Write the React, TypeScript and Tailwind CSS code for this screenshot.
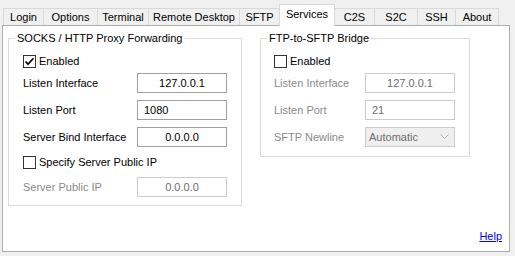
import React from "react";

const tabs: { label: string; w: number }[] = [
  { label: "Login", w: 41 },
  { label: "Options", w: 55 },
  { label: "Terminal", w: 52 },
  { label: "Remote Desktop", w: 92 },
  { label: "SFTP", w: 41 },
  { label: "Services", w: 56 },
  { label: "C2S", w: 41 },
  { label: "S2C", w: 44 },
  { label: "SSH", w: 39 },
  { label: "About", w: 44 },
];

function Check({ checked }: { checked: boolean }) {
  return (
    <div className="w-[13px] h-[13px] border border-[#333333] bg-white flex items-center justify-center shrink-0">
      {checked && (
        <svg width="11" height="11" viewBox="0 0 11 11">
          <path d="M1.5 5.5 L4 8.2 L9.5 2.2" stroke="#000" strokeWidth="1.7" fill="none" />
        </svg>
      )}
    </div>
  );
}

function Field({
  label,
  value,
  align,
  disabledLabel,
  disabledInput,
  labelW,
}: {
  label: string;
  value: string;
  align: "left" | "center";
  disabledLabel?: boolean;
  disabledInput?: boolean;
  labelW: number;
}) {
  return (
    <div className="flex items-center h-[20px]">
      <div
        className={`${disabledLabel ? "text-[#8a8a8a]" : "text-black"}`}
        style={{ width: labelW }}
      >
        {label}
      </div>
      <div
        className={`w-[90px] h-[20px] border bg-white flex items-center ${
          disabledInput ? "border-[#cccccc] text-[#6d6d6d]" : "border-[#a0a0a0] text-black"
        } ${align === "center" ? "justify-center" : "justify-start pl-[6px]"}`}
      >
        {value}
      </div>
    </div>
  );
}

export default function App() {
  return (
    <div
      className="w-[515px] h-[256px] bg-[#f0f0f0] text-[11px] leading-[13px] text-black"
      style={{ fontFamily: '"Liberation Sans", Arial, sans-serif' }}
    >
      <div className="h-[25px] flex items-end pl-[3px]">
        {tabs.map((t, i) => {
          const sel = t.label === "Services";
          return (
            <div
              key={t.label}
              style={{ width: t.w }}
              className={`${i > 0 ? "-ml-px" : ""} border-t border-l border-r border-[#d9d9d9] flex justify-center ${
                sel
                  ? "relative z-10 h-[22px] -mb-px bg-white items-start pt-[3px] border-[#d9d9d9]"
                  : "h-[17px] bg-[#f0f0f0] items-center"
              }`}
            >
              {t.label}
            </div>
          );
        })}
      </div>
      <div className="ml-[2px] w-[508px] h-[227px] border border-[#adadad] bg-white flex flex-col">
        <div className="flex items-start pl-[5px] pt-[6px] gap-[18px]">
          <fieldset className="w-[234px] border border-[#dcdcdc] pl-[14px] pb-[8px]">
            <legend className="ml-[-8px] px-[2px]">SOCKS / HTTP Proxy Forwarding</legend>
            <div className="flex items-center gap-[3px] h-[13px] mt-[10px]">
              <Check checked={true} />
              <span>Enabled</span>
            </div>
            <div className="flex flex-col gap-[7px] mt-[5px]">
              <Field label="Listen Interface" value="127.0.0.1" align="center" labelW={114} />
              <Field label="Listen Port" value="1080" align="left" labelW={114} />
              <Field label="Server Bind Interface" value="0.0.0.0" align="center" labelW={114} />
            </div>
            <div className="flex items-center gap-[3px] h-[13px] mt-[9px]">
              <Check checked={false} />
              <span>Specify Server Public IP</span>
            </div>
            <div className="mt-[8px]">
              <Field
                label="Server Public IP"
                value="0.0.0.0"
                align="center"
                disabledLabel
                disabledInput
                labelW={114}
              />
            </div>
          </fieldset>
          <fieldset className="w-[210px] border border-[#dcdcdc] pl-[13px] pb-[9px]">
            <legend className="ml-[-7px] px-[2px]">FTP-to-SFTP Bridge</legend>
            <div className="flex items-center gap-[3px] h-[13px] mt-[10px]">
              <Check checked={false} />
              <span>Enabled</span>
            </div>
            <div className="flex flex-col gap-[7px] mt-[5px]">
              <Field
                label="Listen Interface"
                value="127.0.0.1"
                align="center"
                disabledLabel
                disabledInput
                labelW={91}
              />
              <Field
                label="Listen Port"
                value="21"
                align="left"
                disabledLabel
                disabledInput
                labelW={91}
              />
              <div className="flex items-center h-[20px]">
                <div className="w-[91px] text-[#8a8a8a]">SFTP Newline</div>
                <div className="w-[90px] h-[20px] border border-[#cccccc] bg-[#efefef] flex items-center justify-between pl-[3px] pr-[5px] text-[#6d6d6d]">
                  <span>Automatic</span>
                  <svg width="9" height="6" viewBox="0 0 9 6">
                    <path d="M0.5 0.5 L4.5 4.5 L8.5 0.5" stroke="#b5b5b5" strokeWidth="1" fill="none" />
                  </svg>
                </div>
              </div>
            </div>
          </fieldset>
        </div>
        <div className="flex-1" />
        <div className="flex justify-end pr-[7px] pb-[8px]">
          <a href="#" className="text-[#0000ff] underline">
            Help
          </a>
        </div>
      </div>
    </div>
  );
}
